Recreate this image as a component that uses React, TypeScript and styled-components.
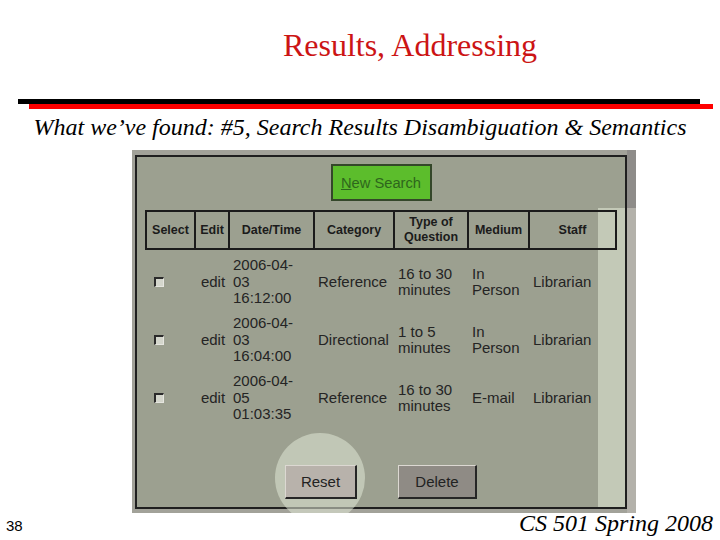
import React from "react"
import styled, { createGlobalStyle } from "styled-components"

const GlobalStyle = createGlobalStyle`
  html, body {
    margin: 0;
    padding: 0;
    background: #ffffff;
  }
`

const COLUMNS = "49px 34px 85px 80px 74px 61px 85px"

const Slide = styled.div`
  width: 720px;
  height: 540px;
  box-sizing: border-box;
  padding-top: 27px;
  display: flex;
  flex-direction: column;
  background: #ffffff;
  overflow: hidden;
  font-family: "Liberation Serif", "Times New Roman", serif;
`

const Title = styled.h1`
  margin: 0;
  padding-left: 100px;
  font-size: 32px;
  line-height: 36px;
  font-weight: normal;
  text-align: center;
  color: #cc1414;
`

const Rules = styled.div`
  margin-top: 36px;
  display: flex;
  flex-direction: column;
`

const Bar = styled.div<{ $left: number; $width: number; $color: string }>`
  height: 5px;
  margin-left: ${p => p.$left}px;
  width: ${p => p.$width}px;
  background: ${p => p.$color};
`

const Subtitle = styled.p`
  margin: 4px 0 0;
  font-size: 24px;
  line-height: 28px;
  font-style: italic;
  text-align: center;
  color: #000;
`

const Frame = styled.div`
  position: relative;
  margin: 9px 0 0 132px;
  width: 504px;
  height: 363px;
  display: flex;
  overflow: hidden;
  background: #a2a299;
  font-family: "Liberation Sans", Arial, sans-serif;
`

const Panel = styled.div`
  flex: 1;
  margin: 5px 0 4px 3px;
  padding: 7px 0 8px;
  border: 2px solid #1f1f1f;
  display: flex;
  flex-direction: column;
  align-items: center;
  background: linear-gradient(#c3c9b7, #c3c9b7) right bottom / 27px calc(100% - 51px) no-repeat,
    #9ca090;
  color: #242424;
`

const Edge = styled.div`
  flex: none;
  width: 9px;
  background: linear-gradient(#8e8c89 0 58px, #b3b1aa 58px);
`

const Spotlight = styled.div`
  position: absolute;
  left: 143px;
  top: 283px;
  width: 90px;
  height: 90px;
  border-radius: 50%;
  background: rgba(224, 232, 214, 0.55);
  pointer-events: none;
  z-index: 1;
`

const NewSearch = styled.div`
  width: 101px;
  height: 37px;
  box-sizing: border-box;
  display: flex;
  align-items: center;
  justify-content: center;
  border: 2px solid #34472a;
  background: #5cbd2c;
  color: #2e661c;
  font-size: 14.7px;

  u {
    text-decoration-thickness: 1px;
  }
`

const HeaderRow = styled.div`
  margin-top: 9px;
  width: 472px;
  height: 40px;
  box-sizing: border-box;
  display: grid;
  grid-template-columns: ${COLUMNS};
  border: 2px solid #1b1b1b;
`

const HeaderCell = styled.div<{ $last?: boolean }>`
  display: flex;
  align-items: center;
  justify-content: center;
  text-align: center;
  border-right: ${p => (p.$last ? "none" : "2px solid #1b1b1b")};
  font-size: 12.5px;
  line-height: 15px;
  font-weight: bold;
  color: #1b1b1b;
`

const Rows = styled.div`
  margin-top: 3px;
  width: 472px;
  display: flex;
  flex-direction: column;
`

const Row = styled.div`
  height: 58px;
  box-sizing: border-box;
  padding: 0 2px;
  display: grid;
  grid-template-columns: ${COLUMNS};
  align-items: center;
  font-size: 15px;
  line-height: 16.5px;
`

const Cell = styled.div<{ $center?: boolean }>`
  padding: 0 3px;
  white-space: pre-line;
  text-align: ${p => (p.$center ? "center" : "left")};
`

const Check = styled.span`
  display: block;
  width: 10px;
  height: 10px;
  box-sizing: border-box;
  margin-left: 7px;
  border-style: solid;
  border-width: 2px 1px 1px 2px;
  border-color: #2a2a2a #e6e6e0 #e6e6e0 #2a2a2a;
  background: #d4d6cc;
`

const Actions = styled.div`
  margin-top: auto;
  display: flex;
  gap: 41px;
`

const ActionButton = styled.div<{ $width: number; $tone: string }>`
  position: relative;
  z-index: 2;
  width: ${p => p.$width}px;
  height: 34px;
  box-sizing: border-box;
  display: flex;
  align-items: center;
  justify-content: center;
  border-style: solid;
  border-width: 1px 2px 2px 1px;
  border-color: #dcd8d2 #262626 #262626 #dcd8d2;
  background: ${p => p.$tone};
  font-size: 15px;
  color: #222;
`

const Footer = styled.div`
  margin-top: -2px;
  padding: 0 7px 0 6px;
  display: flex;
  justify-content: space-between;
  align-items: baseline;
`

const PageNumber = styled.span`
  font-family: "Liberation Sans", Arial, sans-serif;
  font-size: 15px;
  color: #000;
`

const Course = styled.span`
  font-size: 24px;
  line-height: 24px;
  font-style: italic;
  color: #000;
`

const headers = ["Select", "Edit", "Date/Time", "Category", "Type of Question", "Medium", "Staff"]

const rows = [
  { date: "2006-04-\n03\n16:12:00", category: "Reference", type: "16 to 30 minutes", medium: "In Person", staff: "Librarian" },
  { date: "2006-04-\n03\n16:04:00", category: "Directional", type: "1 to 5 minutes", medium: "In Person", staff: "Librarian" },
  { date: "2006-04-\n05\n01:03:35", category: "Reference", type: "16 to 30 minutes", medium: "E-mail", staff: "Librarian" },
]

export default function App() {
  return (
    <>
      <GlobalStyle />
      <Slide>
        <Title>Results, Addressing</Title>
        <Rules>
          <Bar $left={18} $width={682} $color="#000000" />
          <Bar $left={29} $width={684} $color="#ff0000" />
        </Rules>
        <Subtitle>What we’ve found: #5, Search Results Disambiguation &amp; Semantics</Subtitle>
        <Frame>
          <Panel>
            <NewSearch>
              <span>
                <u>N</u>ew Search
              </span>
            </NewSearch>
            <HeaderRow>
              {headers.map((h, i) => (
                <HeaderCell key={h} $last={i === headers.length - 1}>
                  {h}
                </HeaderCell>
              ))}
            </HeaderRow>
            <Rows>
              {rows.map(r => (
                <Row key={r.date}>
                  <div>
                    <Check />
                  </div>
                  <Cell $center>edit</Cell>
                  <Cell>{r.date}</Cell>
                  <Cell>{r.category}</Cell>
                  <Cell>{r.type}</Cell>
                  <Cell>{r.medium}</Cell>
                  <Cell>{r.staff}</Cell>
                </Row>
              ))}
            </Rows>
            <Actions>
              <ActionButton $width={72} $tone="#b8b2ab">
                Reset
              </ActionButton>
              <ActionButton $width={79} $tone="#8f8b85">
                Delete
              </ActionButton>
            </Actions>
          </Panel>
          <Edge />
          <Spotlight />
        </Frame>
        <Footer>
          <PageNumber>38</PageNumber>
          <Course>CS 501 Spring 2008</Course>
        </Footer>
      </Slide>
    </>
  )
}
